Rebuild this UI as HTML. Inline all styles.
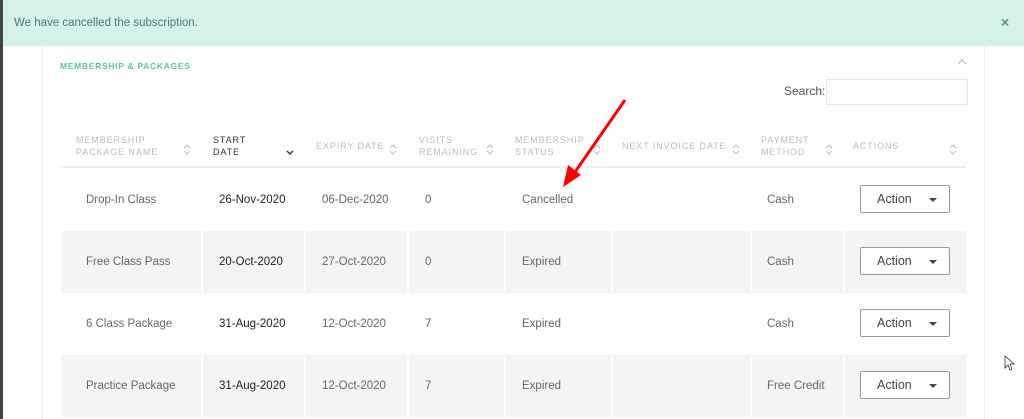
<!DOCTYPE html>
<html><head><meta charset="utf-8"><style>
*{margin:0;padding:0;box-sizing:border-box}
body{width:1024px;height:419px;overflow:hidden;background:#fff;font-family:"Liberation Sans",sans-serif;position:relative}
.a{position:absolute}
.hd{font-size:9px;letter-spacing:.9px;color:#bbb;line-height:12px;text-transform:uppercase}
.c{position:absolute;font-size:11.5px;color:#666}
.b{color:#222}
.btn{position:absolute;width:90px;height:28px;border:1px solid #999;border-radius:2px;background:#fff;font-size:12.5px;color:#444}
.btn span{position:absolute;left:16px;top:6px}
.btn i{position:absolute;left:68px;top:12px;border-left:4px solid transparent;border-right:4px solid transparent;border-top:4px solid #444}
.g{position:absolute;background:#f4f4f4;height:62px}
.s{position:absolute;top:146px}
</style></head><body>
<div class="a" style="left:0;top:0;width:3px;height:419px;background:#444"></div>
<div class="a" style="left:3px;top:0;width:1021px;height:46px;background:#d4f1ea"></div>
<div class="a" style="left:14px;top:17px;font-size:11.5px;color:#4a7d72">We have cancelled the subscription.</div>
<div class="a" style="left:1001px;top:14px;font-size:14px;color:#5a8c80;font-weight:bold">×</div>
<div class="a" style="left:42px;top:46px;width:1px;height:373px;background:#eee"></div>
<div class="a" style="left:984px;top:46px;width:1px;height:373px;background:#eee"></div>
<div class="a" style="left:60px;top:61px;font-size:8.5px;letter-spacing:.7px;color:#5fbfa9;font-weight:bold">MEMBERSHIP &amp; PACKAGES</div>
<svg class="a" style="left:957px;top:59px" width="10" height="6"><path d="M1 5 L5 1 L9 5" fill="none" stroke="#bbb" stroke-width="1.2"/></svg>
<div class="a" style="left:784px;top:84px;font-size:12px;color:#555">Search:</div>
<div class="a" style="left:826px;top:79px;width:142px;height:26px;border:1px solid #e4e4e4"></div>

<div class="a hd" style="left:76px;top:134px">Membership<br>Package Name</div>
<div class="a hd" style="left:213px;top:134px;color:#333">Start<br>Date</div>
<div class="a hd" style="left:316px;top:140px">Expiry Date</div>
<div class="a hd" style="left:419px;top:134px">Visits<br>Remaining</div>
<div class="a hd" style="left:515px;top:134px">Membership<br>Status</div>
<div class="a hd" style="left:622px;top:140px">Next Invoice Date</div>
<div class="a hd" style="left:761px;top:134px">Payment<br>Method</div>
<div class="a hd" style="left:853px;top:140px">Actions</div>
<svg class="a" style="left:0;top:0" width="1024" height="170">
<g fill="none" stroke="#bbb" stroke-width="1.1">
<path d="M184 148 l3 -3 l3 3 M184 151 l3 3 l3 -3"/>
<path d="M390 148 l3 -3 l3 3 M390 151 l3 3 l3 -3"/>
<path d="M487 148 l3 -3 l3 3 M487 151 l3 3 l3 -3"/>
<path d="M594 148 l3 -3 l3 3 M594 151 l3 3 l3 -3"/>
<path d="M733 148 l3 -3 l3 3 M733 151 l3 3 l3 -3"/>
<path d="M826 148 l3 -3 l3 3 M826 151 l3 3 l3 -3"/>
<path d="M950 148 l3 -3 l3 3 M950 151 l3 3 l3 -3"/>
</g>
<path d="M287 151 l3 3 l3 -3" fill="none" stroke="#333" stroke-width="1.4"/>
</svg>
<div class="a" style="left:61px;top:166px;width:905px;height:2px;background:#f0f0f0"></div>

<div class="g" style="left:61px;top:231px;width:905px"></div>
<div class="g" style="left:61px;top:355px;width:905px"></div>
<div class="a" style="left:201px;top:231px;width:2px;height:62px;background:#fff"></div>
<div class="a" style="left:304px;top:231px;width:2px;height:62px;background:#fff"></div>
<div class="a" style="left:407px;top:231px;width:2px;height:62px;background:#fff"></div>
<div class="a" style="left:504px;top:231px;width:2px;height:62px;background:#fff"></div>
<div class="a" style="left:611px;top:231px;width:2px;height:62px;background:#fff"></div>
<div class="a" style="left:750px;top:231px;width:2px;height:62px;background:#fff"></div>
<div class="a" style="left:843px;top:231px;width:2px;height:62px;background:#fff"></div>
<div class="a" style="left:201px;top:355px;width:2px;height:62px;background:#fff"></div>
<div class="a" style="left:304px;top:355px;width:2px;height:62px;background:#fff"></div>
<div class="a" style="left:407px;top:355px;width:2px;height:62px;background:#fff"></div>
<div class="a" style="left:504px;top:355px;width:2px;height:62px;background:#fff"></div>
<div class="a" style="left:611px;top:355px;width:2px;height:62px;background:#fff"></div>
<div class="a" style="left:750px;top:355px;width:2px;height:62px;background:#fff"></div>
<div class="a" style="left:843px;top:355px;width:2px;height:62px;background:#fff"></div>

<div class="c" style="left:86px;top:194px">Drop-In Class</div>
<div class="c b" style="left:219px;top:194px">26-Nov-2020</div>
<div class="c" style="left:322px;top:194px">06-Dec-2020</div>
<div class="c" style="left:425px;top:194px">0</div>
<div class="c" style="left:522px;top:194px">Cancelled</div>
<div class="c" style="left:767px;top:194px">Cash</div>
<div class="btn" style="left:860px;top:185px"><span>Action</span><i></i></div>

<div class="c" style="left:86px;top:256px">Free Class Pass</div>
<div class="c b" style="left:219px;top:256px">20-Oct-2020</div>
<div class="c" style="left:322px;top:256px">27-Oct-2020</div>
<div class="c" style="left:425px;top:256px">0</div>
<div class="c" style="left:522px;top:256px">Expired</div>
<div class="c" style="left:767px;top:256px">Cash</div>
<div class="btn" style="left:860px;top:247px"><span>Action</span><i></i></div>

<div class="c" style="left:86px;top:318px">6 Class Package</div>
<div class="c b" style="left:219px;top:318px">31-Aug-2020</div>
<div class="c" style="left:322px;top:318px">12-Oct-2020</div>
<div class="c" style="left:425px;top:318px">7</div>
<div class="c" style="left:522px;top:318px">Expired</div>
<div class="c" style="left:767px;top:318px">Cash</div>
<div class="btn" style="left:860px;top:309px"><span>Action</span><i></i></div>

<div class="c" style="left:86px;top:380px">Practice Package</div>
<div class="c b" style="left:219px;top:380px">31-Aug-2020</div>
<div class="c" style="left:322px;top:380px">12-Oct-2020</div>
<div class="c" style="left:425px;top:380px">7</div>
<div class="c" style="left:522px;top:380px">Expired</div>
<div class="c" style="left:767px;top:380px">Free Credit</div>
<div class="btn" style="left:860px;top:371px"><span>Action</span><i></i></div>

<svg class="a" style="left:0;top:0" width="1024" height="419">
<line x1="625" y1="100" x2="575" y2="172" stroke="#f00" stroke-width="3"/>
<polygon points="563,187 568,165 581,175" fill="#f00"/>
<path d="M1005 356 L1005 368 L1008 365 L1010 370 L1012 369 L1010 364 L1014 364 Z" fill="#fff" stroke="#333" stroke-width="0.8"/>
</svg>
</body></html>
